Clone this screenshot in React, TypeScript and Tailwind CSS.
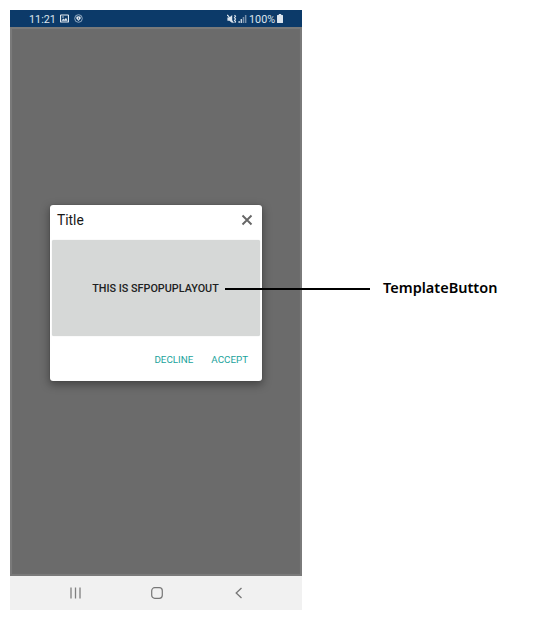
function StatusBar() {
  return (
    <header className="flex h-[17px] shrink-0 items-center bg-[#0c3a69] pl-[19px] text-[10.8px] leading-[17px] text-[#dce5ee]">
      <span className="w-[31px] whitespace-nowrap pt-px">11:21</span>
      <svg className="h-[9px] w-[9px]" viewBox="0 0 9 9">
        <rect x="0.5" y="1" width="8" height="7" rx="0.5" fill="none" stroke="#e3eaf1" strokeWidth="1.2" />
        <path d="M1.5 6.7 3.2 4.5 4.5 5.7 6 3.8 7.5 6.7Z" fill="#e3eaf1" />
        <rect x="2.3" y="2.4" width="1.3" height="1.2" fill="#e3eaf1" />
      </svg>
      <svg className="ml-[5px] h-[9px] w-[9px]" viewBox="0 0 9 9">
        <circle cx="4.5" cy="4.5" r="3.8" fill="none" stroke="#9db3ca" strokeWidth="0.9" />
        <path d="M2.4 2.8 4.5 2.2 6.6 2.8V4.6L4.5 7 2.4 4.6Z" fill="#e3eaf1" />
        <path d="M4.5 3.5V5.3" stroke="#0c3a69" strokeWidth="0.7" />
      </svg>
      <svg className="ml-[144px] h-[10px] w-[10px]" viewBox="0 0 10 10">
        <path d="M0.4 3.4H2.4L5.2 1V9L2.4 6.7H0.4Z" fill="#dce5ee" />
        <path d="M0.4 0.8 6.4 8.8" stroke="#dce5ee" strokeWidth="1.1" />
        <path d="M7.5 1.1 8.5 2.3 7.5 3.6 8.5 5 7.5 6.4 8.5 7.6 7.8 8.8" fill="none" stroke="#dce5ee" strokeWidth="1.2" />
      </svg>
      <svg className="ml-px h-[9px] w-[9px]" viewBox="0 0 9 9">
        <path d="M0.5 7H1.8V9H0.5ZM2.6 5H4V9H2.6Z" fill="#c5d2df" />
        <path d="M4.7 3H6.2V9H4.7ZM6.9 1H8.4V9H6.9Z" fill="#7890ab" />
      </svg>
      <span className="ml-[2px] w-[28px] whitespace-nowrap pt-px">100%</span>
      <svg className="h-[9px] w-[6px]" viewBox="0 0 6 9">
        <path d="M1.8 0H4.2V1H5.5Q6 1 6 1.5V8.5Q6 9 5.5 9H0.5Q0 9 0 8.5V1.5Q0 1 0.5 1H1.8Z" fill="#dce5ee" />
      </svg>
    </header>
  );
}

function Popup() {
  return (
    <section className="mt-[176px] ml-[38px] flex h-[176px] w-[212px] flex-col rounded-[3px] bg-white shadow-[0_3px_9px_1px_rgba(0,0,0,0.35),0_0_1px_#444]">
      <div className="flex h-[35px] items-center justify-between pr-[9px] pl-[7px]">
        <h1 className="pb-[5px] text-[13.8px] leading-[18px] text-[#171717]">Title</h1>
        <svg className="mb-[6px] h-[12px] w-[12px]" viewBox="0 0 12 12">
          <path d="M1.5 1.5 10.5 10.5M10.5 1.5 1.5 10.5" stroke="#666" strokeWidth="1.9" />
        </svg>
      </div>
      <button className="mx-[2px] flex h-[96px] items-center justify-center rounded-[2px] bg-[#d6d8d7] pt-[3px] pr-px text-[10.8px] font-medium text-[#202121] shadow-[0_0_1px_#c5c7c6]">
        <span className="whitespace-nowrap">THIS IS SFPOPUPLAYOUT</span>
      </button>
      <div className="flex h-[45px] items-center justify-end gap-[18px] pt-[3px] pr-[14px] text-[9.8px] text-[#1aa39c]">
        <button>DECLINE</button>
        <button>ACCEPT</button>
      </div>
    </section>
  );
}

function NavigationBar() {
  return (
    <footer className="flex h-[34px] shrink-0 items-center bg-[#f1f1f1] pl-[60px]">
      <svg className="h-[12px] w-[12px]" viewBox="0 0 12 12">
        <path d="M1 .5V11.5M5.5 .5V11.5M10 .5V11.5" stroke="#808080" strokeWidth="1.3" />
      </svg>
      <svg className="ml-[69px] h-[12px] w-[12px]" viewBox="0 0 12 12">
        <rect x="0.7" y="0.7" width="10.6" height="10.6" rx="3" fill="none" stroke="#777" strokeWidth="1.2" />
      </svg>
      <svg className="ml-[72px] h-[12px] w-[8px]" viewBox="0 0 8 12">
        <path d="M6.5 1 1.2 6 6.5 11" fill="none" stroke="#777" strokeWidth="1.3" />
      </svg>
    </footer>
  );
}

export default function App() {
  return (
    <main className="relative h-[620px] w-[540px] overflow-hidden bg-white p-[10px] font-[Roboto,sans-serif]">
      <div className="flex h-[600px] w-[292px] flex-col">
        <StatusBar />
        <div className="h-[549px] border-2 border-[#7a7a7a] bg-[#6b6b6b] shadow-[inset_0_0_1px_#777]">
          <Popup />
        </div>
        <NavigationBar />
      </div>
      <div className="absolute top-[276px] left-[225px] flex h-[26px] items-center">
        <div className="h-[2px] w-[145px] bg-black" />
        <span className="ml-[13px] -mt-[4px] whitespace-nowrap font-['Noto_Sans',sans-serif] text-[14.5px] leading-[20px] font-semibold text-black">TemplateButton</span>
      </div>
    </main>
  );
}
